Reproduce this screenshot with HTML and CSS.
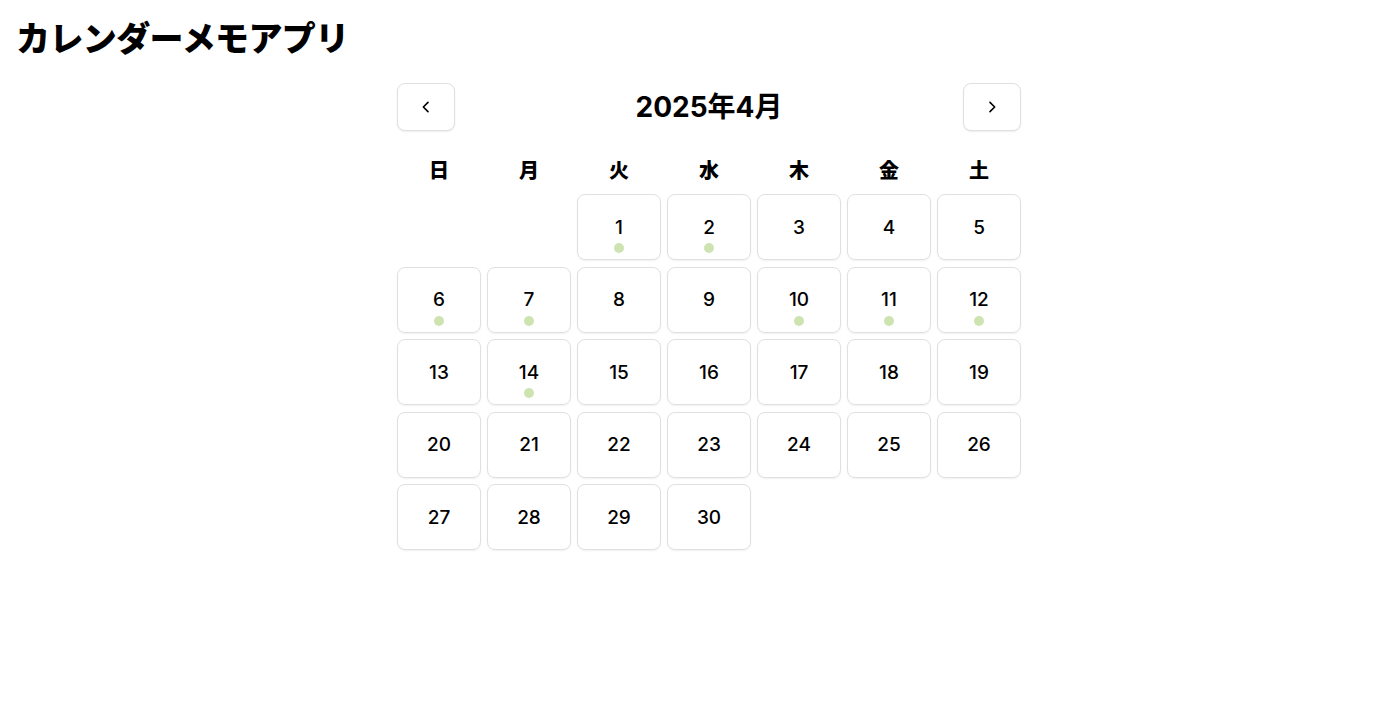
FILE: index.html
```html
<!DOCTYPE html>
<html lang="ja">
<head>
<meta charset="utf-8">
<title>カレンダーメモアプリ</title>
<link rel="stylesheet" href="styles.css">
</head>
<body>
<h1 class="app-title">カレンダーメモアプリ</h1>

<div class="wrap">
<div class="calendar">
  <div class="cal-head">
    <button class="nav-btn" aria-label="前の月">
      <svg width="16" height="16" viewBox="0 0 24 24" fill="none" stroke="#000" stroke-width="2.4" stroke-linecap="round" stroke-linejoin="round"><path d="M15 5l-7 7 7 7"/></svg>
    </button>
    <h2 class="month">2025年4月</h2>
    <button class="nav-btn" aria-label="次の月">
      <svg width="16" height="16" viewBox="0 0 24 24" fill="none" stroke="#000" stroke-width="2.4" stroke-linecap="round" stroke-linejoin="round"><path d="M9 5l7 7-7 7"/></svg>
    </button>
  </div>

  <div class="weekdays">
    <div>日</div><div>月</div><div>火</div><div>水</div><div>木</div><div>金</div><div>土</div>
  </div>

  <div class="days">
    <div class="blank"></div>
    <div class="blank"></div>
    <div class="day memo">1</div>
    <div class="day memo">2</div>
    <div class="day">3</div>
    <div class="day">4</div>
    <div class="day">5</div>

    <div class="day memo">6</div>
    <div class="day memo">7</div>
    <div class="day">8</div>
    <div class="day">9</div>
    <div class="day memo">10</div>
    <div class="day memo">11</div>
    <div class="day memo">12</div>

    <div class="day">13</div>
    <div class="day memo">14</div>
    <div class="day">15</div>
    <div class="day">16</div>
    <div class="day">17</div>
    <div class="day">18</div>
    <div class="day">19</div>

    <div class="day">20</div>
    <div class="day">21</div>
    <div class="day">22</div>
    <div class="day">23</div>
    <div class="day">24</div>
    <div class="day">25</div>
    <div class="day">26</div>

    <div class="day">27</div>
    <div class="day">28</div>
    <div class="day">29</div>
    <div class="day">30</div>
  </div>
</div>
</div>

</body>
</html>
```

FILE: styles.css
```css
body {
 margin: 0;
 padding: 16px;
 background: #fff;
 color: #000;
 font-family: Inter, "Noto Sans CJK JP", sans-serif;
}

h1.app-title {
 margin: 0;
 font-size: 34px;
 line-height: 41px;
 font-weight: 900;
 font-family: "Noto Sans CJK JP", sans-serif;
 letter-spacing: -0.6px;
}

.wrap {
 display: flex;
 justify-content: center;
 padding-left: 18px;
 margin-top: 26px;
}

.calendar {
 width: 624px;
}

.cal-head {
 display: flex;
 align-items: center;
 justify-content: space-between;
 height: 48px;
}

.nav-btn {
 width: 58px;
 height: 48px;
 background: #fff;
 border: 1px solid #e0e0e0;
 border-radius: 8px;
 box-shadow: 0 1px 2px rgba(0,0,0,0.07);
 display: flex;
 align-items: center;
 justify-content: center;
 padding: 0;
 cursor: pointer;
}

h2.month {
 margin: 0;
 font-size: 28px;
 font-weight: 700;
 line-height: 48px;
}

.weekdays {
 display: grid;
 grid-template-columns: repeat(7, 1fr);
 gap: 6px;
 margin-top: 24px;
 height: 30px;
 line-height: 30px;
 text-align: center;
 font-family: "Noto Sans CJK JP", sans-serif;
 font-size: 20px;
 font-weight: 900;
}

.days {
 display: grid;
 grid-template-columns: repeat(7, 1fr);
 grid-auto-rows: 66px;
 gap: 6.5px 6px;
 margin-top: 9px;
}

.day {
 position: relative;
 border: 1px solid #e0e0e0;
 border-radius: 8px;
 box-shadow: 0 1px 2px rgba(0,0,0,0.06);
 display: flex;
 align-items: center;
 justify-content: center;
 font-size: 19px;
 font-weight: 500;
}

.day.memo::after {
 content: "";
 position: absolute;
 left: 50%;
 bottom: 6px;
 width: 10px;
 height: 10px;
 margin-left: -5px;
 border-radius: 50%;
 background: #cde3b1;
}
```
